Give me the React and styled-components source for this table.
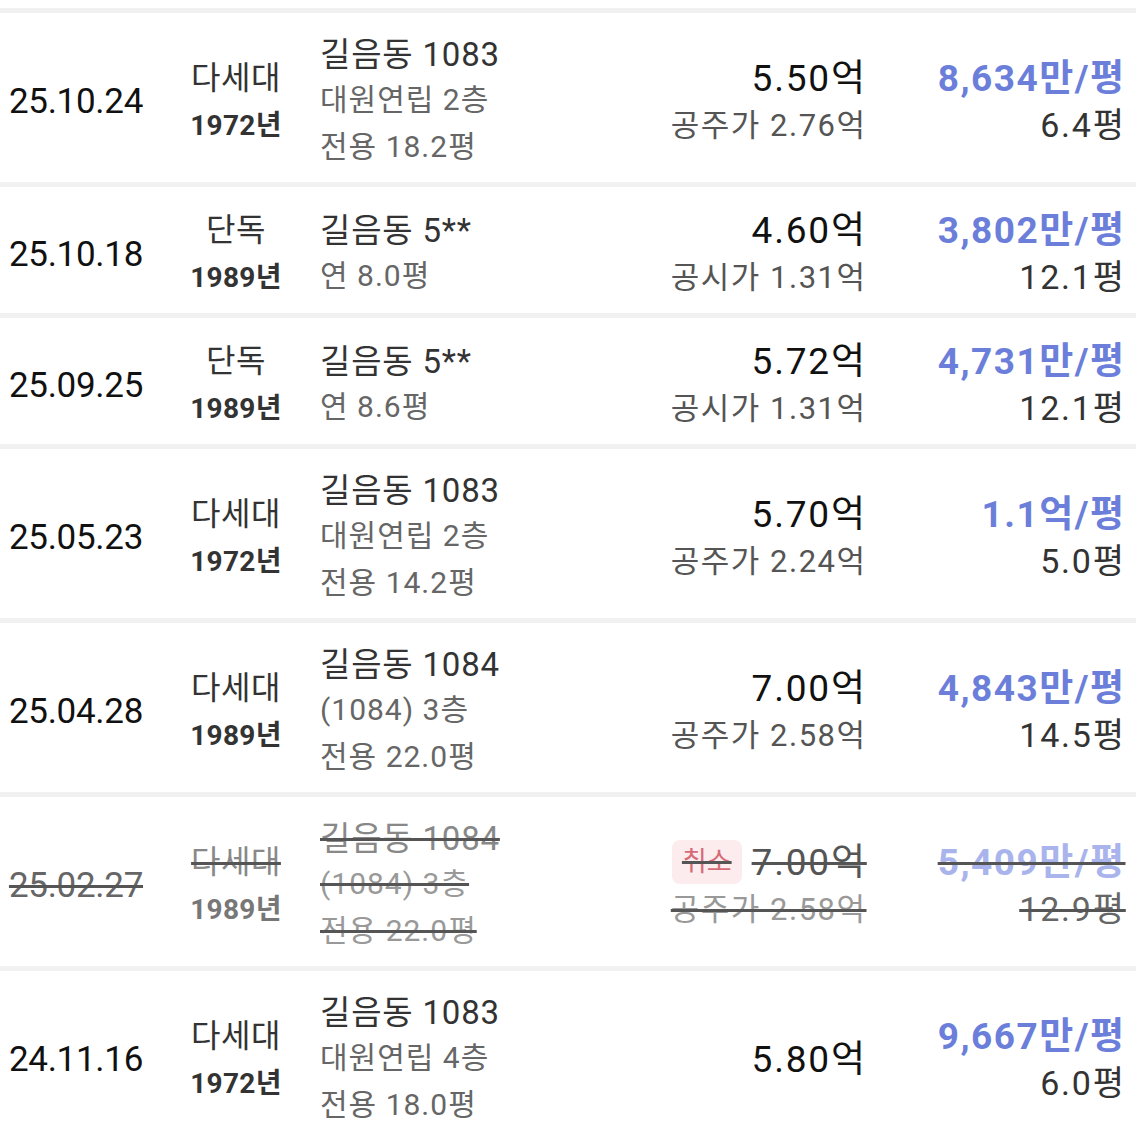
import React from "react";
import styled, { createGlobalStyle, css } from "styled-components";

const Global = createGlobalStyle`
  html, body { margin: 0; padding: 0; background: #fff; }
  body { font-family: Roboto, "Noto Sans CJK KR", sans-serif; -webkit-font-smoothing: antialiased; }
`;

const strike = css`
  text-decoration: line-through;
  text-decoration-color: #555;
  text-decoration-thickness: 3px;
`;

const List = styled.div`
  width: 1136px;
  padding-top: 8px;
  background: #fff;
`;

const Row = styled.div`
  display: grid;
  grid-template-columns: 152px 168px 1fr auto 259px;
  align-items: center;
  padding: 20px 12px 12px 0;
  border-top: 5px solid #f1f1f1;
`;

const DateCell = styled.div`
  text-align: center;
  font-size: 35px;
  line-height: 47px;
  color: ${(p) => (p.$cancel ? "#666" : "#111")};
  letter-spacing: -0.3px;
  ${(p) => p.$cancel && strike}
`;

const TypeCell = styled.div`
  display: flex;
  flex-direction: column;
  align-items: center;
`;

const TypeName = styled.span`
  font-size: 32px;
  line-height: 47px;
  letter-spacing: 0.5px;
  color: ${(p) => (p.$cancel ? "#888" : "#333")};
  ${(p) => p.$cancel && strike}
`;

const Year = styled.span`
  font-size: 28px;
  line-height: 47px;
  font-weight: 700;
  letter-spacing: 0.3px;
  color: ${(p) => (p.$cancel ? "#777" : "#333")};
`;

const AddrCell = styled.div`
  display: flex;
  flex-direction: column;
  align-items: flex-start;
`;

const AddrTitle = styled.span`
  font-size: 33px;
  line-height: 43px;
  letter-spacing: 0.8px;
  color: ${(p) => (p.$cancel ? "#888" : "#333")};
  ${(p) => p.$cancel && strike}
`;

const AddrSub = styled.span`
  font-size: 30px;
  line-height: 47px;
  letter-spacing: 1px;
  color: ${(p) => (p.$cancel ? "#999" : "#666")};
  ${(p) => p.$cancel && strike}
`;

const PriceCell = styled.div`
  display: flex;
  flex-direction: column;
  align-items: flex-end;
`;

const PriceLine = styled.div`
  display: flex;
  align-items: center;
  gap: 10px;
`;

const Price = styled.span`
  font-size: 37px;
  line-height: 47px;
  letter-spacing: 1.8px;
  margin-right: -1.8px;
  color: ${(p) => (p.$cancel ? "#555" : "#111")};
  ${(p) => p.$cancel && strike}
`;

const Badge = styled.span`
  font-size: 27px;
  line-height: 44px;
  padding: 0 10px;
  border-radius: 8px;
  background: #fdecee;
  color: #d66b78;
  ${strike}
`;

const SubPrice = styled.span`
  font-size: 31px;
  line-height: 47px;
  letter-spacing: 1.5px;
  margin-right: -1.5px;
  color: ${(p) => (p.$cancel ? "#999" : "#555")};
  ${(p) => p.$cancel && strike}
`;

const UnitCell = styled.div`
  display: flex;
  flex-direction: column;
  align-items: flex-end;
`;

const UnitPrice = styled.span`
  font-size: 37px;
  line-height: 47px;
  font-weight: 700;
  letter-spacing: 1.5px;
  margin-right: -1.5px;
  color: ${(p) => (p.$cancel ? "#a9b4ec" : "#6b7fda")};
  ${(p) => p.$cancel && strike}
`;

const Area = styled.span`
  font-size: 34px;
  line-height: 47px;
  letter-spacing: 1.8px;
  margin-right: -1.8px;
  color: ${(p) => (p.$cancel ? "#666" : "#333")};
  ${(p) => p.$cancel && strike}
`;

const rows = [
  { date: "25.10.24", type: "다세대", year: "1972년", addr: ["길음동 1083", "대원연립 2층", "전용 18.2평"], price: "5.50억", sub: "공주가 2.76억", unit: "8,634만/평", area: "6.4평" },
  { date: "25.10.18", type: "단독", year: "1989년", addr: ["길음동 5**", "연 8.0평"], price: "4.60억", sub: "공시가 1.31억", unit: "3,802만/평", area: "12.1평" },
  { date: "25.09.25", type: "단독", year: "1989년", addr: ["길음동 5**", "연 8.6평"], price: "5.72억", sub: "공시가 1.31억", unit: "4,731만/평", area: "12.1평" },
  { date: "25.05.23", type: "다세대", year: "1972년", addr: ["길음동 1083", "대원연립 2층", "전용 14.2평"], price: "5.70억", sub: "공주가 2.24억", unit: "1.1억/평", area: "5.0평" },
  { date: "25.04.28", type: "다세대", year: "1989년", addr: ["길음동 1084", "(1084) 3층", "전용 22.0평"], price: "7.00억", sub: "공주가 2.58억", unit: "4,843만/평", area: "14.5평" },
  { date: "25.02.27", type: "다세대", year: "1989년", addr: ["길음동 1084", "(1084) 3층", "전용 22.0평"], price: "7.00억", sub: "공주가 2.58억", unit: "5,409만/평", area: "12.9평", cancel: true },
  { date: "24.11.16", type: "다세대", year: "1972년", addr: ["길음동 1083", "대원연립 4층", "전용 18.0평"], price: "5.80억", unit: "9,667만/평", area: "6.0평" },
];

export default function App() {
  return (
    <>
      <Global />
      <List>
        {rows.map((r, i) => (
          <Row key={i}>
            <DateCell $cancel={r.cancel}>{r.date}</DateCell>
            <TypeCell>
              <TypeName $cancel={r.cancel}>{r.type}</TypeName>
              <Year $cancel={r.cancel}>{r.year}</Year>
            </TypeCell>
            <AddrCell>
              <AddrTitle $cancel={r.cancel}>{r.addr[0]}</AddrTitle>
              {r.addr.slice(1).map((a, j) => (
                <AddrSub key={j} $cancel={r.cancel}>{a}</AddrSub>
              ))}
            </AddrCell>
            <PriceCell>
              <PriceLine>
                {r.cancel && <Badge>취소</Badge>}
                <Price $cancel={r.cancel}>{r.price}</Price>
              </PriceLine>
              {r.sub && <SubPrice $cancel={r.cancel}>{r.sub}</SubPrice>}
            </PriceCell>
            <UnitCell>
              <UnitPrice $cancel={r.cancel}>{r.unit}</UnitPrice>
              <Area $cancel={r.cancel}>{r.area}</Area>
            </UnitCell>
          </Row>
        ))}
      </List>
    </>
  );
}
